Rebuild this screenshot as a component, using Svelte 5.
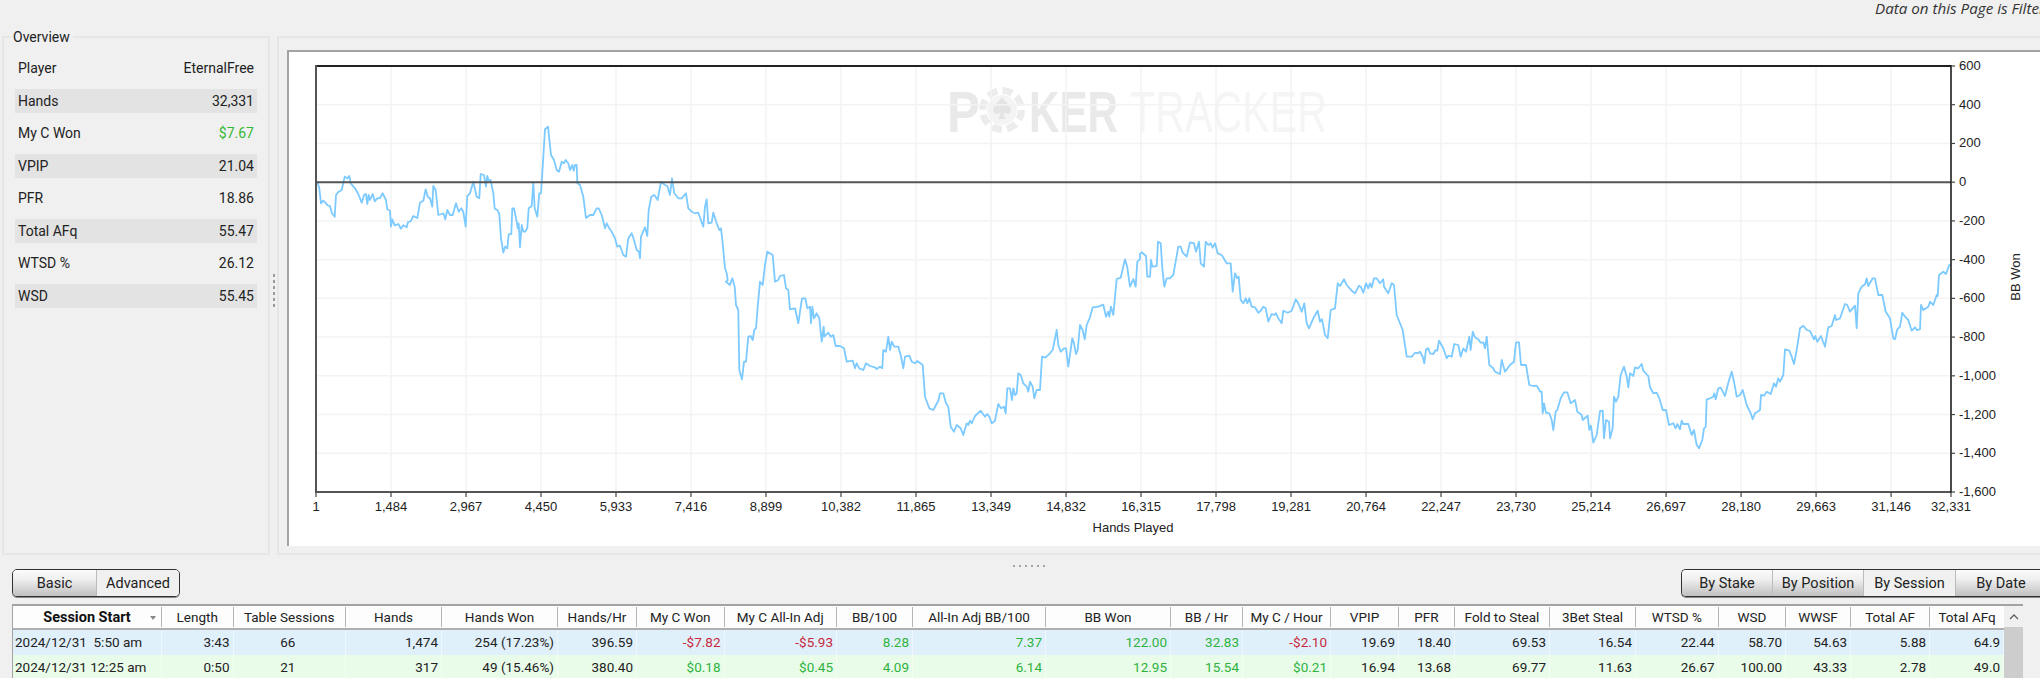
<script>
  const trace = [
    [260, 100, "172,245 178,265 183,310 190,302 196,308 203,316 210,318 216,340 224,350 228,285 235,276 245,270 254,230 262,235 268,228 272,250 285,265 295,282 305,308 312,285 318,282 322,312 326,285 330,300 338,282 344,304 352,295 360,294 368,280 378,300 382,328 390,332 393,380 397,358 404,376 415,372 423,386 430,376 440,382 444,366 452,364 460,348 472,354 480,308 490,302 497,268 503,290 510,295 517,320 520,258 527,270 535,345 545,342 550,340 556,358 562,330 570,345 578,345 588,310 596,335 604,325 610,336 617,380 622,288 630,280 640,245 650,290 658,295 662,222 672,225 678,260 682,228 686,242 692,240 700,280 704,326 712,330 718,342 723,415 730,458 735,440 742,445 746,403 754,402 757,325 762,325 770,365 773,385 776,370 780,442 785,375 790,395 795,395 802,385 806,325 815,318 820,248 824,325 832,350 838,280 843,280 848,200 855,88 864,80 873,165 882,180 890,210 897,215 905,185 912,190 917,180 925,190 930,210 937,195 941,212 945,195 950,195 952,250 960,255 970,290 978,354 990,345 1000,345 1010,325 1016,325 1025,345 1035,385 1040,370 1048,385 1055,395 1065,415 1072,440 1080,437 1090,465 1098,470 1105,415 1115,400 1122,420 1130,450 1137,455 1140,475 1143,410 1155,382 1162,408 1166,330 1174,290 1183,285 1193,300 1203,245 1215,255 1222,258 1230,285 1236,235 1243,280 1255,295 1265,295 1278,280 1285,325 1295,335 1305,340 1315,338 1330,380 1335,320 1340,298 1345,370 1355,368 1360,338 1370,370 1378,390 1383,385 1388,430 1395,505 1400,520 1403,540"],
    [700, 180, "78,305 90,315 97,295 104,320 108,375 115,390 118,570 126,598 132,545 138,545 145,470 152,468 158,480 163,450 168,445 173,380 180,305 188,315 195,255 202,215 218,225 225,305 235,300 240,288 252,285 258,325 265,330 270,388 285,385 295,430 306,355 316,355 322,385 330,380 333,430 337,380 342,415 350,400 358,415 365,485 371,440 373,470 385,458 392,470 400,465 407,498 420,498 432,505 440,545 458,542 465,565 470,550 478,565 490,570 498,550 510,558 525,562 530,567 540,560 547,565 550,510 558,515 565,470 570,510 575,485 583,500 595,500 602,525 610,565 615,530 628,527 635,545 645,550 652,543 668,555 675,650 688,685 700,690 715,662 720,640 730,640 738,670 745,680 752,740 762,755 770,735 782,745 790,765 800,730 805,735 810,722 815,730 825,708 842,692 855,710 862,702 868,710 875,730 885,722 895,672 903,685 912,680 917,700 922,625 930,625 936,660 940,625 945,645 950,640 955,580 962,585 970,610 980,620 985,635 990,605 998,620 1003,655 1010,630 1020,630 1026,530 1036,533 1050,520 1058,510 1070,450 1075,495 1082,515 1092,505 1098,505 1105,560 1117,475 1122,490 1128,522 1133,510 1140,435 1148,450 1154,478 1160,435 1170,412 1178,382 1195,380 1210,374 1218,410 1225,395 1228,410 1233,380 1240,405 1250,297 1262,293 1275,238 1282,262 1290,320 1300,297 1307,320 1312,245 1320,238"],
    [1120, 220, "60,102 65,97 78,108 82,170 90,170 93,120 97,140 110,138 114,65 122,70 127,145 133,200 140,175 150,175 160,165 175,80 182,80 188,98 200,110 210,67 222,70 228,95 237,65 242,130 252,140 257,65 265,75 272,70 278,83 285,70 293,100 305,105 320,130 332,130 338,215 345,160 352,175 356,170 362,240 370,250 377,235 382,250 388,235 395,260 405,262 415,278 422,272 430,260 437,265 445,305 455,282 462,285 468,280 475,295 485,310 490,272 503,278 515,272 527,238 535,250 545,275 553,250 560,310 567,325 580,295 593,272 600,305 606,298 615,345 623,355 632,270 645,265 653,190 660,198 672,178 680,195 695,212 705,220 717,197 722,200 730,218 738,190 745,205 750,190 755,202 762,175 770,175 780,190 790,178 792,200 805,220 815,190 822,195 830,285 848,330 860,410 875,410 885,398 893,400 900,395 908,410 913,430 918,388 925,385 930,400 940,402 947,390 952,392 957,362 970,385 980,415 985,407 995,410 1003,372 1015,375 1022,410 1030,385 1038,395 1048,350 1052,390 1058,335 1065,352 1075,358 1082,368 1090,367 1095,385 1100,350 1108,435 1120,445 1125,455 1140,462 1145,420 1155,455 1170,435 1182,425 1188,367 1197,367 1203,435 1218,435 1228,495 1240,498 1250,497 1258,510"],
    [1540, 250, "0,425 5,425 8,490 12,460 18,488 28,490 35,510 40,540 47,485 52,480 62,445 72,427 82,427 92,460 105,450 112,485 125,495 128,510 143,497 148,540 153,527 160,578 170,555 180,483 188,482 192,565 198,510 207,515 210,565 218,535 222,440 228,455 235,440 242,375 252,350 260,380 265,412 270,370 280,378 285,352 295,355 305,342 310,362 325,378 330,412 340,430 350,428 358,445 368,480 378,480 387,525 400,520 407,535 412,522 420,538 425,512 430,522 445,522 455,555 462,540 470,585 477,595 487,570 492,535 497,530 500,448 510,445 520,440 523,430 527,448 535,415 542,413 555,438 565,398 575,365 582,395 590,440 600,435 608,420 620,465 632,490 638,508 645,490 660,480 663,435 672,437 680,425 692,432 702,400 708,410 715,385 720,395 730,375 735,298 748,302 755,320 762,342 770,300 780,235 790,227 800,240 810,243 822,268 826,258 832,275 843,258 855,290 865,232 875,228 885,195 888,210 900,205 915,162 922,165 930,185 945,167 950,235 955,130 965,110 975,103 980,85 985,108 998,85 1005,85 1015,135 1027,135 1037,185 1050,205 1060,265 1065,268 1072,238 1080,230 1087,188 1095,200 1105,210 1115,242 1125,232 1130,240 1140,238 1143,165 1150,180 1165,170 1170,155 1180,165 1190,135 1193,138 1197,75 1210,65 1218,72 1228,45 1232,45"]
  ];
  const linePoints = trace
    .map(([ox, oy, s]) =>
      s.split(" ").map((p) => {
        const [a, b] = p.split(",").map(Number);
        return `${(ox + a / 3).toFixed(1)},${(oy + b / 3).toFixed(1)}`;
      }).join(" ")
    )
    .join(" ");

  const xVals = [1,1484,2967,4450,5933,7416,8899,10382,11865,13349,14832,16315,17798,19281,20764,22247,23730,25214,26697,28180,29663,31146,32331];
  const xTicks = xVals.map((v) => ({ label: v.toLocaleString("en-US"), x: 316 + ((v - 1) * 1635) / 32330 }));
  const yVals = [600,400,200,0,-200,-400,-600,-800,-1000,-1200,-1400,-1600];
  const yTicks = yVals.map((v) => ({ label: v.toLocaleString("en-US"), y: 66 + ((600 - v) * 426) / 2200 }));

  const overview = [
    ["Player", "EternalFree", ""],
    ["Hands", "32,331", ""],
    ["My C Won", "$7.67", "g"],
    ["VPIP", "21.04", ""],
    ["PFR", "18.86", ""],
    ["Total AFq", "55.47", ""],
    ["WTSD %", "26.12", ""],
    ["WSD", "55.45", ""]
  ];
  const heads = ["Session Start","Length","Table Sessions","Hands","Hands Won","Hands/Hr","My C Won","My C All-In Adj","BB/100","All-In Adj BB/100","BB Won","BB / Hr","My C / Hour","VPIP","PFR","Fold to Steal","3Bet Steal","WTSD %","WSD","WWSF","Total AF","Total AFq"];
  const rows = [
    { cls: "blue", cells: [["2024/12/31  5:50 am","l"],["3:43",""],["66","c"],["1,474",""],["254 (17.23%)",""],["396.59",""],["-$7.82","r"],["-$5.93","r"],["8.28","g"],["7.37","g"],["122.00","g"],["32.83","g"],["-$2.10","r"],["19.69",""],["18.40",""],["69.53",""],["16.54",""],["22.44",""],["58.70",""],["54.63",""],["5.88",""],["64.9",""]] },
    { cls: "green", cells: [["2024/12/31 12:25 am","l"],["0:50",""],["21","c"],["317",""],["49 (15.46%)",""],["380.40",""],["$0.18","g"],["$0.45","g"],["4.09","g"],["6.14","g"],["12.95","g"],["15.54","g"],["$0.21","g"],["16.94",""],["13.68",""],["69.77",""],["11.63",""],["26.67",""],["100.00",""],["43.33",""],["2.78",""],["49.0",""]] }
  ];
</script>

<div class="page">
  <div class="topbar"><span class="filter">Data on this Page is Filtered</span></div>

  <div class="main">
    <section class="overview">
      <span class="legend">Overview</span>
      <div class="ov-list">
        {#each overview as [k, v, c], i}
          <div class="ov-row" class:band={i % 2 === 1}>
            <span>{k}</span><span class:pos={c === "g"}>{v}</span>
          </div>
        {/each}
      </div>
    </section>
    <div class="vsplit">
      {#each Array(6) as _}<i></i>{/each}
    </div>
    <section class="chartbox">
      <svg class="chart" viewBox="289 52 1751 494" width="1751" height="494">
        <g class="wm">
          <text class="wm-b" transform="translate(947 132) scale(.85 1)">P</text>
          <g class="chip">
            <circle cx="1002" cy="110" r="19.5" fill="none" stroke="#ececec" stroke-width="7" stroke-dasharray="10 5.3"/>
            <circle cx="1002" cy="110" r="15" fill="#f4f4f4"/>
            <path d="M1002 97c3 5 9 8 9 13 0 4-5 5-7.500 2 .3 3 1 5 2.500 7h-8c1.500-2 2.200-4 2.500-7-2.500 3-7.500 2-7.500-2 0-5 6-8 9-13z" fill="#e4e4e4"/>
          </g>
          <text class="wm-b" transform="translate(1029 132) scale(.727 1)">KER</text>
          <text class="wm-t" transform="translate(1130 132) scale(.711 1)">TRACKER</text>
        </g>
        <g class="grid">
          {#each xTicks as t}<line x1={t.x} x2={t.x} y1="66" y2="492"/>{/each}
          {#each yTicks as t}<line x1="316" x2="1951" y1={t.y} y2={t.y}/>{/each}
        </g>
        <polyline class="series" points={linePoints}/>
        <line class="dark" x1="316" x2="1951" y1={yTicks[3].y} y2={yTicks[3].y}/>
        <line class="black" x1="316" x2="1951" y1="66" y2="66"/>
        <line class="dark" x1="316" x2="316" y1="65" y2="493"/>
        <line class="dark" x1="316" x2="1951" y1="492" y2="492"/>
        <line class="blackr" x1="1951" x2="1951" y1="65" y2="493"/>
        {#each xTicks as t}
          <line class="tick" x1={t.x} x2={t.x} y1="492" y2="497"/>
          <text class="ax" x={t.x} y="511" text-anchor="middle">{t.label}</text>
        {/each}
        {#each yTicks as t}
          <line class="tick" x1="1951" x2="1955" y1={t.y} y2={t.y}/>
          <text class="ax" x="1959" y={t.y + 4}>{t.label}</text>
        {/each}
        <text class="ax" x="1133" y="532" text-anchor="middle">Hands Played</text>
        <text class="ax" transform="translate(2020 277) rotate(-90)" text-anchor="middle">BB Won</text>
      </svg>
    </section>
  </div>

  <div class="hsplit">{#each Array(6) as _}<i></i>{/each}</div>

  <div class="toolbar">
    <div class="seg">
      <button class="on w1">Basic</button><button class="w2">Advanced</button>
    </div>
    <div class="seg right">
      <button class="on r1">By Stake</button><button class="on r2">By Position</button><button class="r3">By Session</button><button class="on r4">By Date</button>
    </div>
  </div>

  <div class="tablewrap">
    <div class="table">
      <div class="thead gridrow">
        {#each heads as h, i}
          <div class="th" class:first={i === 0}>{h}{#if i === 0}<b class="sort"></b>{/if}</div>
        {/each}
      </div>
      {#each rows as r}
        <div class="gridrow tr {r.cls}">
          {#each r.cells as [t, c]}
            <div class="td {c}">{t}</div>
          {/each}
        </div>
      {/each}
    </div>
    <div class="scroll">
      <div class="sbtn">
        <svg width="10" height="7" viewBox="0 0 10 7"><path d="M1 6l4-4 4 4" fill="none" stroke="#606060" stroke-width="1.300"/></svg>
      </div>
      <div class="thumb"></div>
    </div>
  </div>
</div>

<style>
  :global(body) { margin: 0; background: #f0f0f0; }
  .page {
    width: 2040px; height: 678px; overflow: hidden; background: #f0f0f0;
    font-family: Roboto, "Noto Sans", sans-serif; font-size: 13px; color: #222;
  }
  .topbar { height: 36px; display: flex; padding-left: 1875px; overflow: hidden; }
  .filter { font-style: italic; font-size: 15.200px; line-height: 17px; white-space: nowrap; color: #333; font-family: "Open Sans", sans-serif; }
  .main { height: 519px; display: flex; padding-left: 2px; }
  .overview { position: relative; width: 264px; border: 2px solid #e6e6e6; box-sizing: content-box; height: 515px; padding: 0; }
  .legend { position: absolute; left: 6px; top: -9px; padding: 0 3px 0 3px; background: #f0f0f0; font-size: 14px; line-height: 16px; }
  .ov-list { display: grid; grid-auto-rows: 24.500px; row-gap: 8px; padding: 18px 11px 0 11px; font-size: 14px; }
  .ov-row { display: flex; justify-content: space-between; align-items: center; padding: 0 3px 0 3px; }
  .band { background: #e3e3e3; }
  .pos { color: #35b835; }
  .vsplit { width: 7px; flex: none; display: flex; flex-direction: column; gap: 3px; align-items: center; padding-top: 238px; box-sizing: border-box; }
  .vsplit i { width: 2px; height: 3px; background: #9a9a9a; }
  .chartbox { flex: 1; border: 2px solid #e6e6e6; border-right: 0; padding: 12px 0 7px 8px; height: 496px; }
  .chart { display: block; background: #fff; border-top: 2px solid #a3a3a3; border-left: 2px solid #a3a3a3; }
  .wm-b { font: 700 58px "Liberation Sans", sans-serif; fill: #e9e9e9; }
  .wm-t { font: 400 58px "Liberation Sans", sans-serif; fill: #f5f5f5; }
  .grid line { stroke: #f3f3f3; stroke-width: 1.500; }
  .series { fill: none; stroke: #7ccaff; stroke-width: 1.800; stroke-linejoin: round; }
  .dark { stroke: #555; stroke-width: 2; }
  .black { stroke: #222; stroke-width: 2; }
  .blackr { stroke: #111; stroke-width: 1.500; }
  .tick { stroke: #444; stroke-width: 1.200; }
  .ax { font: 13px "Liberation Sans", sans-serif; fill: #222; }
  .hsplit { height: 14px; display: flex; justify-content: center; align-items: center; gap: 4px; padding-left: 17px; padding-top: 7px; box-sizing: border-box; }
  .hsplit i { width: 2px; height: 2px; background: #a5a5a5; }
  .toolbar { height: 35px; display: flex; justify-content: space-between; padding-left: 12px; box-sizing: border-box; margin-right: -6px; }
  .seg { display: flex; height: 28px; border: 1px solid #333; border-radius: 5px; overflow: hidden; box-sizing: border-box; box-shadow: 0 1px 0 #888; }
  .seg button { font: inherit; font-size: 14.500px; color: #222; padding: 0; border: 0; background: #f0f0f0; height: 100%; }
  .seg button.on { background: linear-gradient(#fbfbfb, #f0f0f0 35%, #c0c0c0); }
  .seg button + button { border-left: 1px solid #bbb; }
  .w1 { width: 83px; } .w2 { width: 83px; }
  .right { border-right: 0; border-radius: 5px 0 0 5px; }
  .r1 { width: 90px; } .r2 { width: 91px; } .r3 { width: 92px; } .r4 { width: 91px; }
  .tablewrap { display: flex; padding-left: 12px; width: 2011px; height: 74px; box-sizing: border-box; }
  .table { width: 1992px; flex: none; border-top: 2px solid #a3a3a3; border-left: 1px solid #a3a3a3; box-sizing: border-box; overflow: hidden; font-size: 13.500px; }
  .gridrow { display: grid; grid-template-columns: 149px 71.500px 112.500px 96px 116px 79px 87.500px 112.500px 76px 133px 125px 72px 88px 68px 56px 95px 86px 82.700px 67.400px 65px 79px 74px; }
  .thead { height: 22px; background: #fdfdfd; border-bottom: 2px solid #b0b0b0; font-size: 13.500px; }
  .th { position: relative; display: flex; justify-content: center; align-items: center; border-right: 1px solid #b5b5b5; white-space: nowrap; overflow: hidden; height: 20px; margin-top: 1px; }
  .th:last-child { border-right: 0; }
  .first { font-weight: 700; color: #111; font-size: 14.500px; }
  .sort { position: absolute; right: 5px; top: 9px; width: 0; height: 0; border-left: 3.500px solid transparent; border-right: 3.500px solid transparent; border-top: 4px solid #888; }
  .tr { height: 25px; line-height: 25px; }
  .blue { background: #e0f0fb; }
  .green { background: #e9fce9; }
  .td { text-align: right; padding-right: 3px; white-space: pre; overflow: hidden; border-right: 1px solid rgba(255,255,255,.45); }
  .td.l { text-align: left; padding-left: 2px; }
  .td.c { text-align: center; }
  .td.g { color: #2fb33f; }
  .td.r { color: #c8283c; }
  .scroll { width: 19px; flex: none; border-top: 2px solid #a3a3a3; box-sizing: border-box; display: flex; flex-direction: column; }
  .sbtn { height: 21px; background: #f0f0f0; display: flex; align-items: center; justify-content: center; }
  .thumb { flex: 1; background: #cdcdcd; }
</style>
